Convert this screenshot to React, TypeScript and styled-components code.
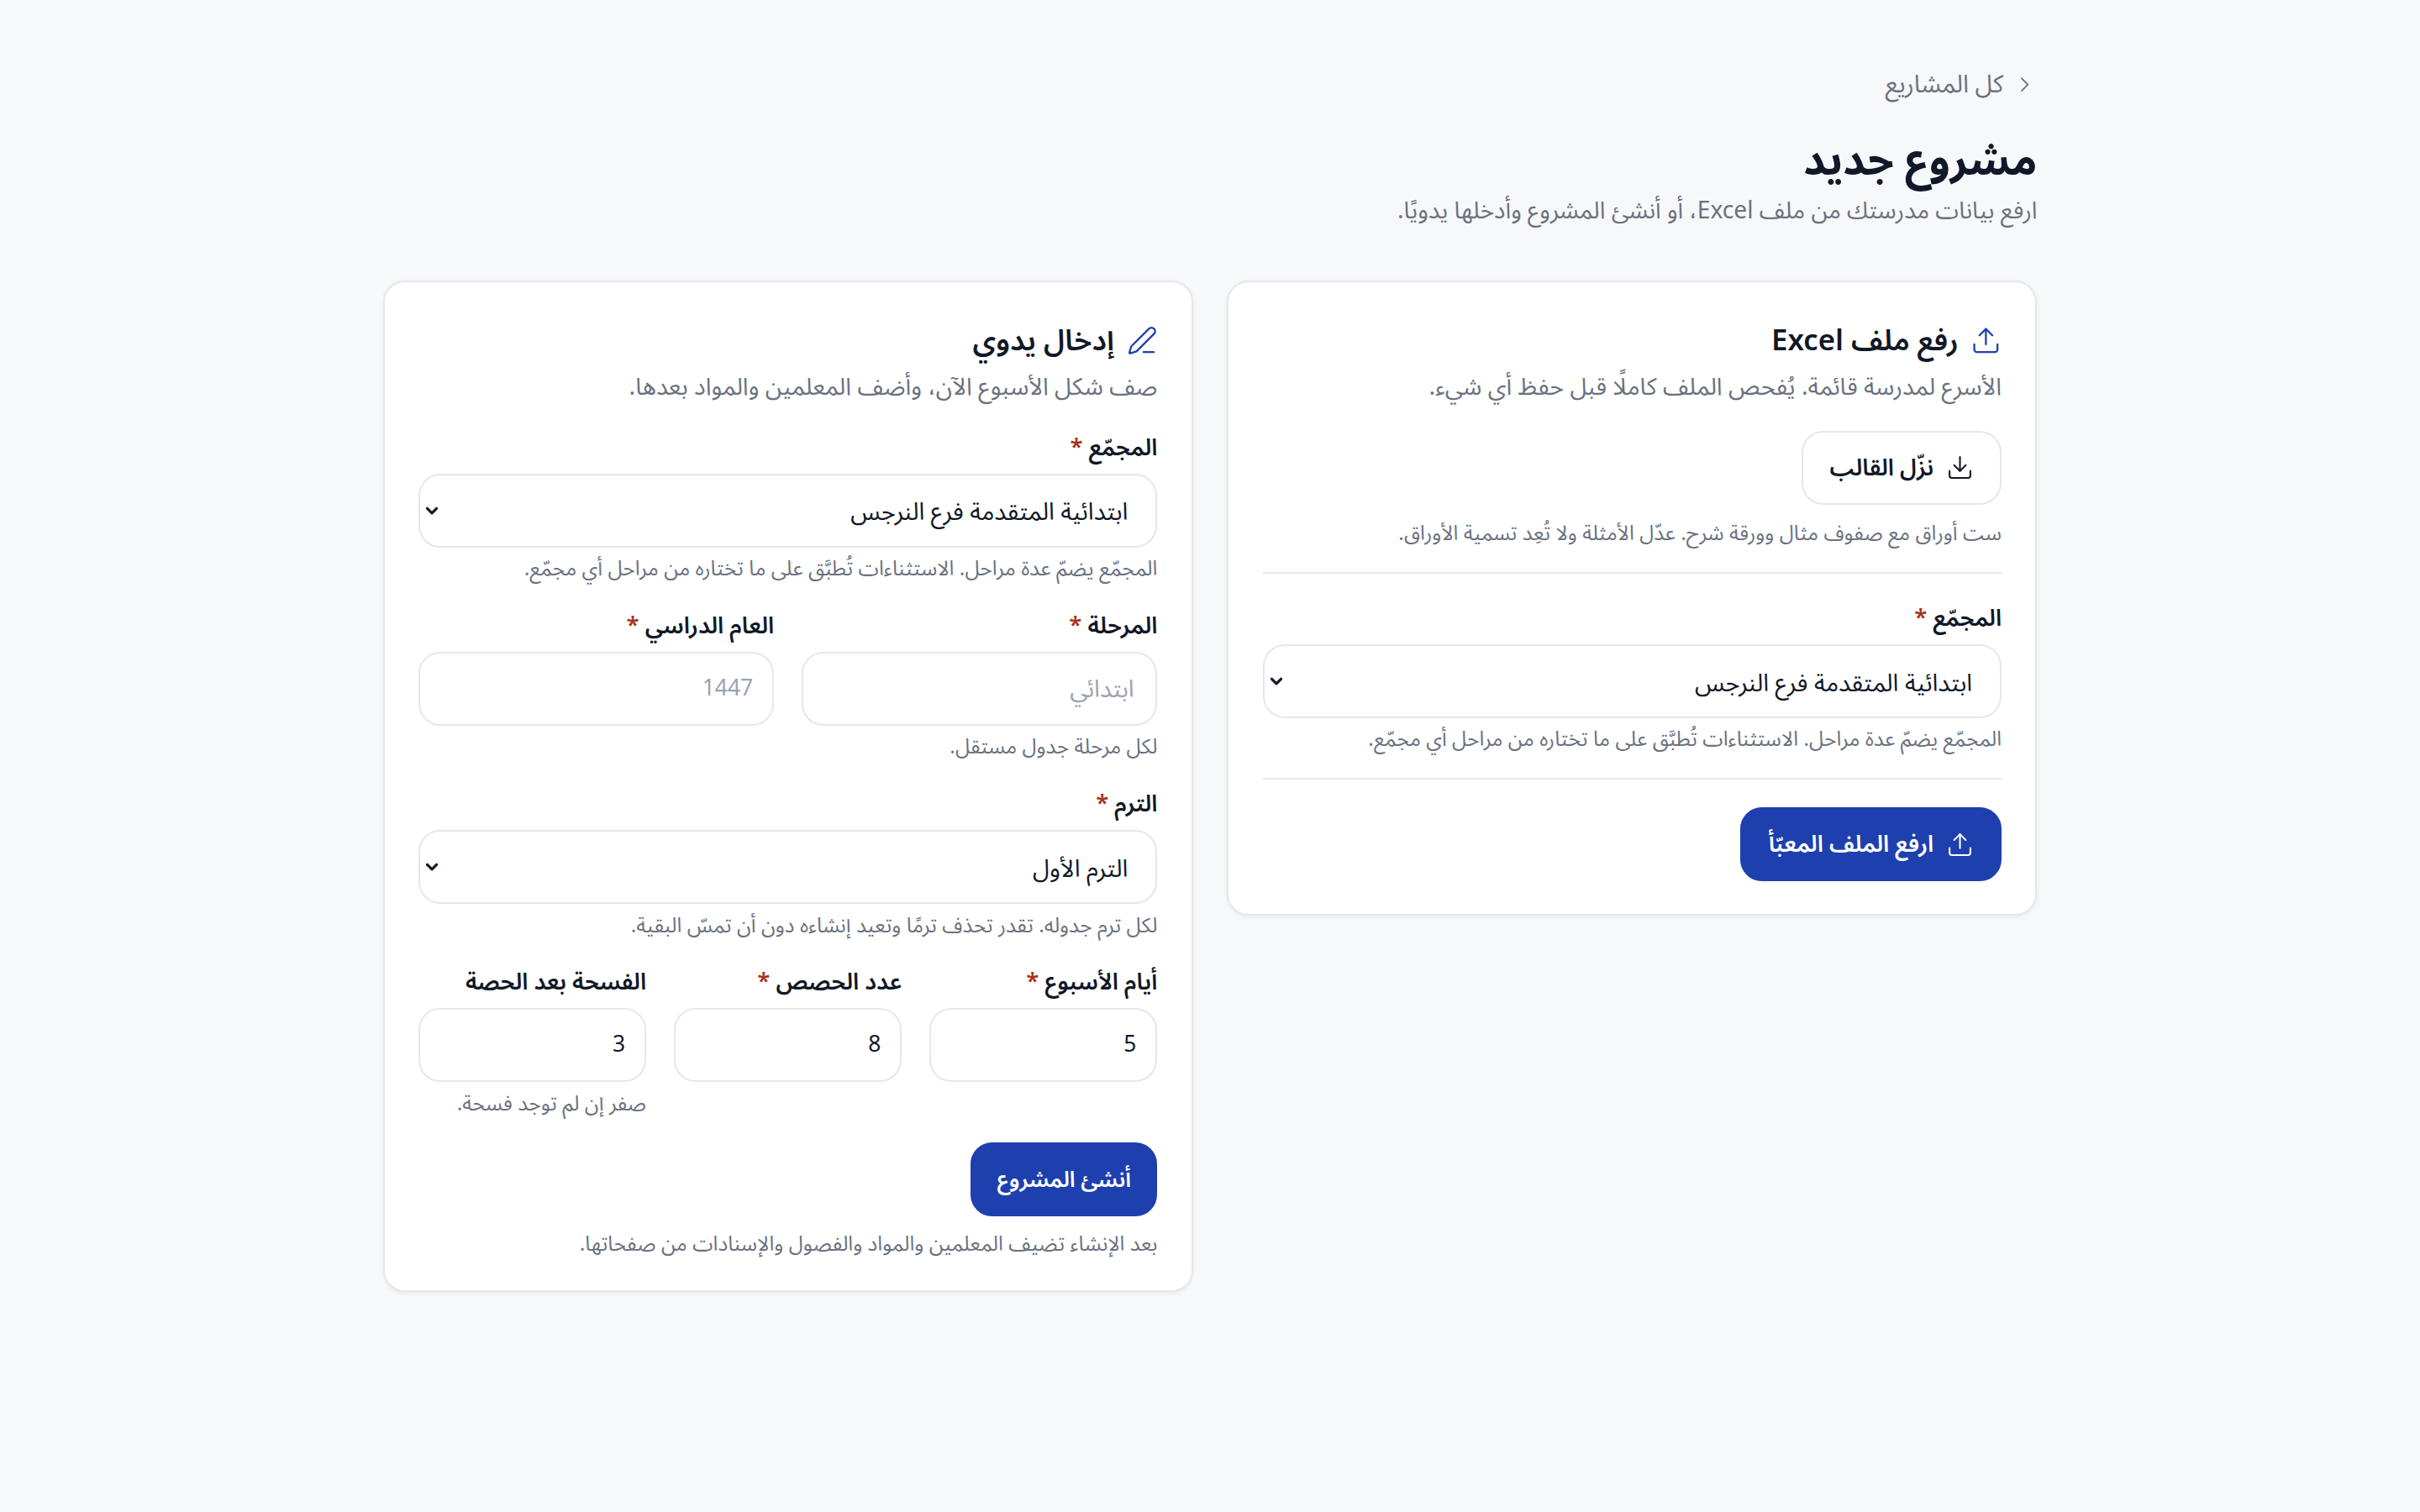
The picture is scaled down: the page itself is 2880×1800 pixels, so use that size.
import * as React from 'react';
import styled, { createGlobalStyle } from 'styled-components';
import { ChevronDown, ChevronRight, Download, PenLine, Upload } from 'lucide-react';

const GlobalStyle = createGlobalStyle`
  html {
    zoom: 1.83673;
    background: #f7f8fa;
  }
  body {
    margin: 0;
    font-family: "Noto Sans Arabic", "Noto Sans", sans-serif;
    color: #111827;
  }
  * {
    box-sizing: border-box;
  }
`;

const Page = styled.main`
  max-width: 1120px;
  margin: 0 auto;
  padding: 44px 24px 48px;
`;

const BackLink = styled.a`
  display: flex;
  align-items: center;
  gap: 6px;
  font-size: 16px;
  line-height: 22px;
  color: #6b7280;
`;

const Title = styled.h1`
  margin: 20px 0 0;
  font-size: 27.5px;
  line-height: 38px;
  font-weight: 700;
  color: #111827;
`;

const Subtitle = styled.p`
  margin: 2px 0 34px;
  font-size: 15.35px;
  line-height: 22px;
  color: #6b7280;
`;

const Columns = styled.div`
  display: grid;
  grid-template-columns: 1fr 1fr;
  gap: 22px;
  align-items: start;
`;

const Card = styled.section`
  background: #fff;
  border: 1.1px solid #e5e7eb;
  border-radius: 14px;
  padding: 24px 22px 21px;
  box-shadow: 0 1px 3px rgba(17, 24, 39, 0.06);
`;

const CardTitle = styled.h2`
  display: flex;
  align-items: center;
  gap: 8px;
  margin: 0;
  font-size: 19px;
  line-height: 29px;
  font-weight: 600;
  svg {
    color: #1e40af;
    margin-bottom: 2px;
  }
`;

const CardDesc = styled.p`
  margin: 4px 0 17px;
  font-size: 15.55px;
  line-height: 22px;
  color: #6b7280;
`;

const Button = styled.button<{ $primary?: boolean }>`
  display: inline-flex;
  align-items: center;
  gap: 8px;
  height: 48px;
  padding: 0 17px;
  font: inherit;
  font-size: 15px;
  font-weight: 600;
  border-radius: 14px;
  border: 1.1px solid ${(p) => (p.$primary ? '#1e40af' : '#e5e7eb')};
  background: ${(p) => (p.$primary ? '#1e40af' : '#fff')};
  color: ${(p) => (p.$primary ? '#fff' : '#111827')};
`;

const CreateButton = styled(Button)`
  font-size: 14.2px;
  padding: 0 16px;
`;

const Hint = styled.p<{ $gap?: number }>`
  margin: ${(p) => p.$gap ?? 5}px 0 0;
  font-size: 13.4px;
  line-height: 18px;
  color: #6b7280;
`;

const Divider = styled.hr`
  border: 0;
  border-top: 1.1px solid #e5e7eb;
  margin: 15.5px 0 18px;
`;

const Field = styled.div`
  min-width: 0;
`;

const Fields = styled.div`
  display: flex;
  flex-direction: column;
  gap: 16.5px;
`;

const Row = styled.div<{ $cols: number }>`
  display: grid;
  grid-template-columns: repeat(${(p) => p.$cols}, 1fr);
  gap: 18px;
`;

const Label = styled.label`
  display: block;
  margin-bottom: 6px;
  font-size: 15px;
  line-height: 22px;
  font-weight: 600;
`;

const Star = styled.span`
  color: #a8321a;
`;

const SelectWrap = styled.div`
  position: relative;
  svg {
    position: absolute;
    left: 3px;
    top: 18px;
    color: #111827;
    pointer-events: none;
  }
`;

const Select = styled.select`
  display: block;
  width: 100%;
  height: 48px;
  padding: 2px 18px 0 14px;
  appearance: none;
  font: inherit;
  font-size: 15.7px;
  color: #111827;
  background: #fff;
  border: 1.1px solid #e5e7eb;
  border-radius: 14px;
`;

const Input = styled.input<{ $digits?: boolean }>`
  display: block;
  width: 100%;
  height: 48px;
  padding: 0 ${(p) => (p.$digits ? '12.5px' : '14px')};
  font: inherit;
  font-size: ${(p) => (p.$digits ? '14.4px' : '15.7px')};
  color: #111827;
  background: #fff;
  border: 1.1px solid #e5e7eb;
  border-radius: 14px;
  &::placeholder {
    color: #9ca3af;
  }
`;

const Actions = styled.div`
  margin-top: 16px;
`;

const campus = 'ابتدائية المتقدمة فرع النرجس';
const campusHint = 'المجمّع يضمّ عدة مراحل. الاستثناءات تُطبَّق على ما تختاره من مراحل أي مجمّع.';

function FieldLabel({ text, required }: { text: string; required?: boolean }) {
  return (
    <Label>
      {text}
      {required && <Star> *</Star>}
    </Label>
  );
}

function Dropdown({ value }: { value: string }) {
  return (
    <SelectWrap>
      <Select defaultValue={value}>
        <option>{value}</option>
      </Select>
      <ChevronDown size={12} strokeWidth={3.5} />
    </SelectWrap>
  );
}

function CampusField() {
  return (
    <Field>
      <FieldLabel text="المجمّع" required />
      <Dropdown value={campus} />
      <Hint>{campusHint}</Hint>
    </Field>
  );
}

export default function App() {
  return (
    <Page dir="rtl" lang="ar">
      <GlobalStyle />
      <BackLink>
        <ChevronRight size={16} strokeWidth={1.5} />
        كل المشاريع
      </BackLink>
      <Title>مشروع جديد</Title>
      <Subtitle>ارفع بيانات مدرستك من ملف Excel، أو أنشئ المشروع وأدخلها يدويًا.</Subtitle>

      <Columns>
        <Card>
          <CardTitle>
            <Upload size={20} strokeWidth={1.5} />
            رفع ملف Excel
          </CardTitle>
          <CardDesc>الأسرع لمدرسة قائمة. يُفحص الملف كاملًا قبل حفظ أي شيء.</CardDesc>
          <Button type="button">
            <Download size={18} strokeWidth={1.5} />
            نزّل القالب
          </Button>
          <Hint $gap={10}>ست أوراق مع صفوف مثال وورقة شرح. عدّل الأمثلة ولا تُعِد تسمية الأوراق.</Hint>
          <Divider />
          <CampusField />
          <Divider />
          <Button type="button" $primary>
            <Upload size={18} strokeWidth={1.5} />
            ارفع الملف المعبّأ
          </Button>
        </Card>

        <Card>
          <CardTitle>
            <PenLine size={20} strokeWidth={1.5} />
            إدخال يدوي
          </CardTitle>
          <CardDesc>صف شكل الأسبوع الآن، وأضف المعلمين والمواد بعدها.</CardDesc>
          <Fields>
            <CampusField />
            <Row $cols={2}>
              <Field>
                <FieldLabel text="المرحلة" required />
                <Input placeholder="ابتدائي" />
                <Hint>لكل مرحلة جدول مستقل.</Hint>
              </Field>
              <Field>
                <FieldLabel text="العام الدراسي" required />
                <Input $digits placeholder="1447" />
              </Field>
            </Row>
            <Field>
              <FieldLabel text="الترم" required />
              <Dropdown value="الترم الأول" />
              <Hint>لكل ترم جدوله. تقدر تحذف ترمًا وتعيد إنشاءه دون أن تمسّ البقية.</Hint>
            </Field>
            <Row $cols={3}>
              <Field>
                <FieldLabel text="أيام الأسبوع" required />
                <Input $digits defaultValue="5" />
              </Field>
              <Field>
                <FieldLabel text="عدد الحصص" required />
                <Input $digits defaultValue="8" />
              </Field>
              <Field>
                <FieldLabel text="الفسحة بعد الحصة" />
                <Input $digits defaultValue="3" />
                <Hint>صفر إن لم توجد فسحة.</Hint>
              </Field>
            </Row>
          </Fields>
          <Actions>
            <CreateButton type="button" $primary>
              أنشئ المشروع
            </CreateButton>
            <Hint $gap={9}>بعد الإنشاء تضيف المعلمين والمواد والفصول والإسنادات من صفحاتها.</Hint>
          </Actions>
        </Card>
      </Columns>
    </Page>
  );
}
